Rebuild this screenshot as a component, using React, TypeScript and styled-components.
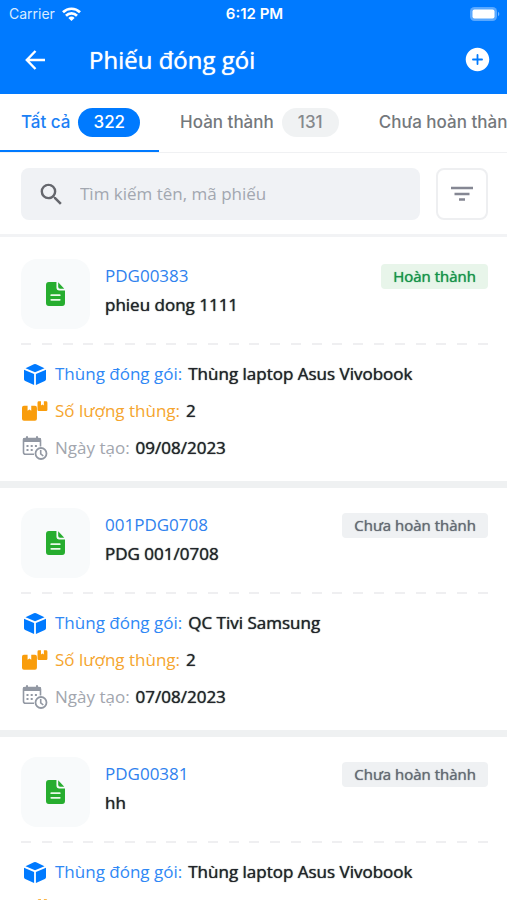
import React from "react";
import styled, { createGlobalStyle, css } from "styled-components";
import { IoAddCircle } from "react-icons/io5";
import { MdSearch } from "react-icons/md";

const GlobalStyle = createGlobalStyle`
  *, *::before, *::after { box-sizing: border-box; }
  html, body { margin: 0; padding: 0; }
  body {
    background: #fff;
    color: #212529;
    font-family: "Open Sans", "Noto Sans", sans-serif;
    font-size: 17px;
    line-height: 24px;
    overflow-x: hidden;
  }
  button, input { font: inherit; color: inherit; border: 0; padding: 0; background: none; }
  button { cursor: pointer; }
  svg { display: block; flex: none; }
`;

/* Slightly heavier strokes on the regular cut. */
const emphasis = css`
  text-shadow: 0 0 1px currentColor;
`;

const Screen = styled.div`
  height: 100vh;
  overflow: hidden;
`;

const Header = styled.header`
  background: #007aff;
  color: #fff;
`;

const StatusBar = styled.div`
  display: grid;
  grid-template-columns: 1fr auto 1fr;
  align-items: center;
  height: 27px;
  padding: 0 7px 0 9px;
  font-family: Inter, sans-serif;
  font-size: 14px;
  line-height: 20px;
`;

const Carrier = styled.span`
  display: flex;
  align-items: center;
  gap: 7px;
  color: #d9ebff;
`;

const Clock = styled.time`
  font-size: 15px;
  font-weight: 600;
`;

const Battery = styled.span`
  justify-self: end;
`;

const TitleBar = styled.div`
  display: flex;
  align-items: center;
  height: 67px;
  padding: 0 15px 2px 24px;
`;

const IconButton = styled.button`
  display: grid;
  place-items: center;
`;

const Title = styled.h1`
  flex: 1;
  margin: 0 0 0 41px;
  font-size: 24px;
  font-weight: 500;
  line-height: 36px;
  ${emphasis}
`;

const Tabs = styled.nav`
  display: flex;
  height: 59px;
  overflow: hidden;
  border-bottom: 1px solid #f0f1f3;
`;

const Tab = styled.button<{ $active?: boolean }>`
  display: flex;
  flex: none;
  align-items: center;
  gap: 8px;
  height: 59px;
  padding: 0 19px 0 21px;
  border-bottom: 3px solid ${(p) => (p.$active ? "#007aff" : "transparent")};
  color: ${(p) => (p.$active ? "#1b80f5" : "#74787c")};
  font-family: Inter, sans-serif;
  font-size: 17px;
  font-weight: 500;
  white-space: nowrap;
`;

const Count = styled.span<{ $active?: boolean }>`
  min-width: 57px;
  padding: 0 15px;
  border-radius: 15px;
  background: ${(p) => (p.$active ? "#007aff" : "#f0f2f3")};
  color: ${(p) => (p.$active ? "#fff" : "#85898d")};
  line-height: 29px;
  text-align: center;
`;

const SearchBar = styled.form`
  display: flex;
  gap: 16px;
  padding: 15px 19px 14px 21px;
  border-bottom: 3px solid #f2f3f5;
`;

const SearchField = styled.label`
  display: flex;
  flex: 1;
  align-items: center;
  gap: 14px;
  min-width: 0;
  height: 52px;
  padding: 0 16px;
  border-radius: 8px;
  background: #f0f2f5;
  color: #65676d;
`;

const SearchInput = styled.input`
  flex: 1;
  min-width: 0;
  outline: 0;
  &::placeholder { color: #a2a7b0; opacity: 1; }
`;

const FilterButton = styled(IconButton)`
  width: 52px;
  height: 52px;
  border: 2px solid #eeeff1;
  border-radius: 8px;
`;

const List = styled.main`
  display: flex;
  flex-direction: column;
  padding-top: 2px;
`;

const Card = styled.article`
  padding: 20px 19px 20px 21px;
  border-bottom: 7px solid #eff1f2;
`;

const CardHead = styled.div`
  display: flex;
  align-items: flex-start;
  gap: 15px;
`;

const Thumb = styled.div`
  display: grid;
  place-items: center;
  width: 69px;
  height: 70px;
  border-radius: 16px;
  background: #f8fafb;
`;

const Names = styled.div`
  flex: 1;
  min-width: 0;
  padding-top: 5px;
`;

const Code = styled.a`
  display: block;
  margin-bottom: 5px;
  color: #2f82ee;
  text-decoration: none;
`;

const Name = styled.h2`
  margin: 0;
  font-size: 17px;
  font-weight: 500;
  line-height: 24px;
  ${emphasis}
`;

const Status = styled.span<{ $done: boolean }>`
  margin-top: 5px;
  padding: 0 12px;
  border-radius: 4px;
  background: ${(p) => (p.$done ? "#e8f5ea" : "#eff1f3")};
  color: ${(p) => (p.$done ? "#16934a" : "#646a73")};
  font-size: 15px;
  font-weight: 500;
  line-height: 25px;
  ${emphasis}
`;

const DashedRule = styled.div`
  display: flex;
  justify-content: space-between;
  margin: 14px 0 16px;
`;

const Dash = styled.span`
  width: 10px;
  height: 2px;
  background: #efeff1;
`;

const Details = styled.dl`
  display: flex;
  flex-direction: column;
  gap: 11px;
  margin: 0;
`;

const Detail = styled.div<{ $color: string }>`
  display: flex;
  align-items: center;
  gap: 6px;
  height: 26px;
  color: ${(p) => p.$color};
`;

const DetailIcon = styled.span`
  display: grid;
  place-items: center;
  width: 28px;
`;

const Term = styled.dt``;

const Value = styled.dd`
  margin: 0;
  color: #212529;
  font-weight: 500;
  ${emphasis}
`;

const WifiIcon = () => (
  <svg width="19" height="14" viewBox="0 0 19 14" fill="none" stroke="#fff" strokeWidth="2.7">
    <path d="M1 5.2a12.2 12.2 0 0 1 17 0" />
    <path d="M4 8.7a7.8 7.8 0 0 1 11 0" />
    <path d="M9.5 14 6.400 10.900a4.400 4.400 0 0 1 6.200 0z" fill="#fff" stroke="none" />
  </svg>
);

const BatteryIcon = () => (
  <svg width="30" height="14" viewBox="0 0 30 14">
    <rect x="0" y="0" width="27" height="14" rx="4.500" fill="#fff" fillOpacity=".35" />
    <rect x="2.500" y="2.500" width="22" height="9" rx="2" fill="#fff" />
    <path d="M28 4.800v4.400c1.800-.8 1.800-3.600 0-4.400z" fill="#fff" fillOpacity=".45" />
  </svg>
);

const BackIcon = () => (
  <svg width="24" height="24" viewBox="0 0 24 24" fill="none" stroke="#fff" strokeWidth="2.4">
    <path d="M21 12H3.500M11.500 3 2.800 12l8.700 9" />
  </svg>
);

const FilterIcon = () => (
  <svg width="24" height="16" viewBox="0 0 24 16" stroke="#858793" strokeWidth="2.4">
    <path d="M1 2h22M4.500 8h15M9 13.500h6" />
  </svg>
);

const DocumentIcon = () => (
  <svg width="19" height="24" viewBox="0 0 20 24" preserveAspectRatio="none">
    <path d="M3 0h8v5.500a3 3 0 0 0 3 3h6V21a3 3 0 0 1-3 3H3a3 3 0 0 1-3-3V3a3 3 0 0 1 3-3z" fill="#27ad2f" />
    <path d="M12.800.3v4.500a2 2 0 0 0 2 2h4.400z" fill="#27ad2f" />
    <path d="M5.500 13.200h9M5.500 17.800h9" stroke="#e9f9e9" strokeWidth="1.800" strokeLinecap="round" />
  </svg>
);

const CubeIcon = () => (
  <svg width="22" height="21" viewBox="0 0 22 21" fill="#007aff">
    <path d="M9.900.3a2.700 2.700 0 0 1 2.200 0l8.400 3.900L11 8.300 1.500 4.200z" />
    <path d="M0 5.700 10.100 10v11L1.200 17A2 2 0 0 1 0 15.200z" />
    <path d="M22 5.700 11.900 10v11l8.900-4a2 2 0 0 0 1.200-1.800z" />
  </svg>
);

const BoxesIcon = () => (
  <svg width="26" height="20" viewBox="0 0 27 20" fill="#f99d0c">
    <path d="M2 4.500h3.800v5.300l1.900-1.300 1.900 1.300V4.500h3.900a2 2 0 0 1 2 2V18a2 2 0 0 1-2 2H2a2 2 0 0 1-2-2V6.500a2 2 0 0 1 2-2z" />
    <path d="M17.500 0h2.200v4.300l1.500-1 1.500 1V0h2.300a1.400 1.400 0 0 1 1.400 1.400v7.200a1.400 1.400 0 0 1-1.400 1.400h-7.500a1.400 1.400 0 0 1-1.400-1.400V1.400A1.400 1.400 0 0 1 17.500 0z" />
  </svg>
);

const CalendarIcon = () => (
  <svg width="26" height="24" viewBox="0 0 26 24" fill="none" stroke="#9298a3">
    <path d="M12 18.300H3.500a2 2 0 0 1-2-2V4a1.500 1.500 0 0 1 1.500-1.500h14A1.500 1.500 0 0 1 18.500 4v6.500" strokeWidth="1.600" />
    <path d="M1.500 2.500h17v3h-17z" fill="#9298a3" />
    <path d="M5 .3V4M15 .3V4" strokeWidth="2" />
    <path d="M4.500 10h11.500M4.500 14h8" strokeWidth="2" strokeDasharray="2 2.200" />
    <circle cx="19" cy="17.500" r="5.500" fill="#fff" strokeWidth="1.800" />
    <path d="M18.700 14v3.800l2.600 2.200" strokeWidth="1.600" />
  </svg>
);

const tabs = [
  { label: "Tất cả", count: 322, active: true },
  { label: "Hoàn thành", count: 131 },
  { label: "Chưa hoàn thành", count: 191 },
];

const slips = [
  { code: "PDG00383", name: "phieu dong 1111", done: true, box: "Thùng laptop Asus Vivobook", quantity: 2, date: "09/08/2023" },
  { code: "001PDG0708", name: "PDG 001/0708", done: false, box: "QC Tivi Samsung", quantity: 2, date: "07/08/2023" },
  { code: "PDG00381", name: "hh", done: false, box: "Thùng laptop Asus Vivobook", quantity: 2, date: "07/08/2023" },
];

type Slip = (typeof slips)[number];

const SlipCard = ({ slip }: { slip: Slip }) => (
  <Card>
    <CardHead>
      <Thumb><DocumentIcon /></Thumb>
      <Names>
        <Code href={`#${slip.code}`}>{slip.code}</Code>
        <Name>{slip.name}</Name>
      </Names>
      <Status $done={slip.done}>{slip.done ? "Hoàn thành" : "Chưa hoàn thành"}</Status>
    </CardHead>
    <DashedRule aria-hidden="true">
      {Array.from({ length: 23 }, (_, i) => <Dash key={i} />)}
    </DashedRule>
    <Details>
      <Detail $color="#2f88f5">
        <DetailIcon><CubeIcon /></DetailIcon>
        <Term>Thùng đóng gói:</Term>
        <Value>{slip.box}</Value>
      </Detail>
      <Detail $color="#f5a52e">
        <DetailIcon><BoxesIcon /></DetailIcon>
        <Term>Số lượng thùng:</Term>
        <Value>{slip.quantity}</Value>
      </Detail>
      <Detail $color="#a2a6ae">
        <DetailIcon><CalendarIcon /></DetailIcon>
        <Term>Ngày tạo:</Term>
        <Value>{slip.date}</Value>
      </Detail>
    </Details>
  </Card>
);

export default function App() {
  return (
    <Screen>
      <GlobalStyle />
      <Header>
        <StatusBar>
          <Carrier>Carrier <WifiIcon /></Carrier>
          <Clock>6:12 PM</Clock>
          <Battery><BatteryIcon /></Battery>
        </StatusBar>
        <TitleBar>
          <IconButton type="button" aria-label="Quay lại"><BackIcon /></IconButton>
          <Title>Phiếu đóng gói</Title>
          <IconButton type="button" aria-label="Thêm phiếu"><IoAddCircle size={29} /></IconButton>
        </TitleBar>
      </Header>
      <Tabs>
        {tabs.map((tab) => (
          <Tab key={tab.label} type="button" $active={tab.active}>
            {tab.label}
            <Count $active={tab.active}>{tab.count}</Count>
          </Tab>
        ))}
      </Tabs>
      <SearchBar onSubmit={(e) => e.preventDefault()}>
        <SearchField>
          <MdSearch size={29} />
          <SearchInput type="text" aria-label="Tìm kiếm" placeholder="Tìm kiếm tên, mã phiếu" />
        </SearchField>
        <FilterButton type="button" aria-label="Bộ lọc"><FilterIcon /></FilterButton>
      </SearchBar>
      <List>
        {slips.map((slip) => <SlipCard key={slip.code} slip={slip} />)}
      </List>
    </Screen>
  );
}
